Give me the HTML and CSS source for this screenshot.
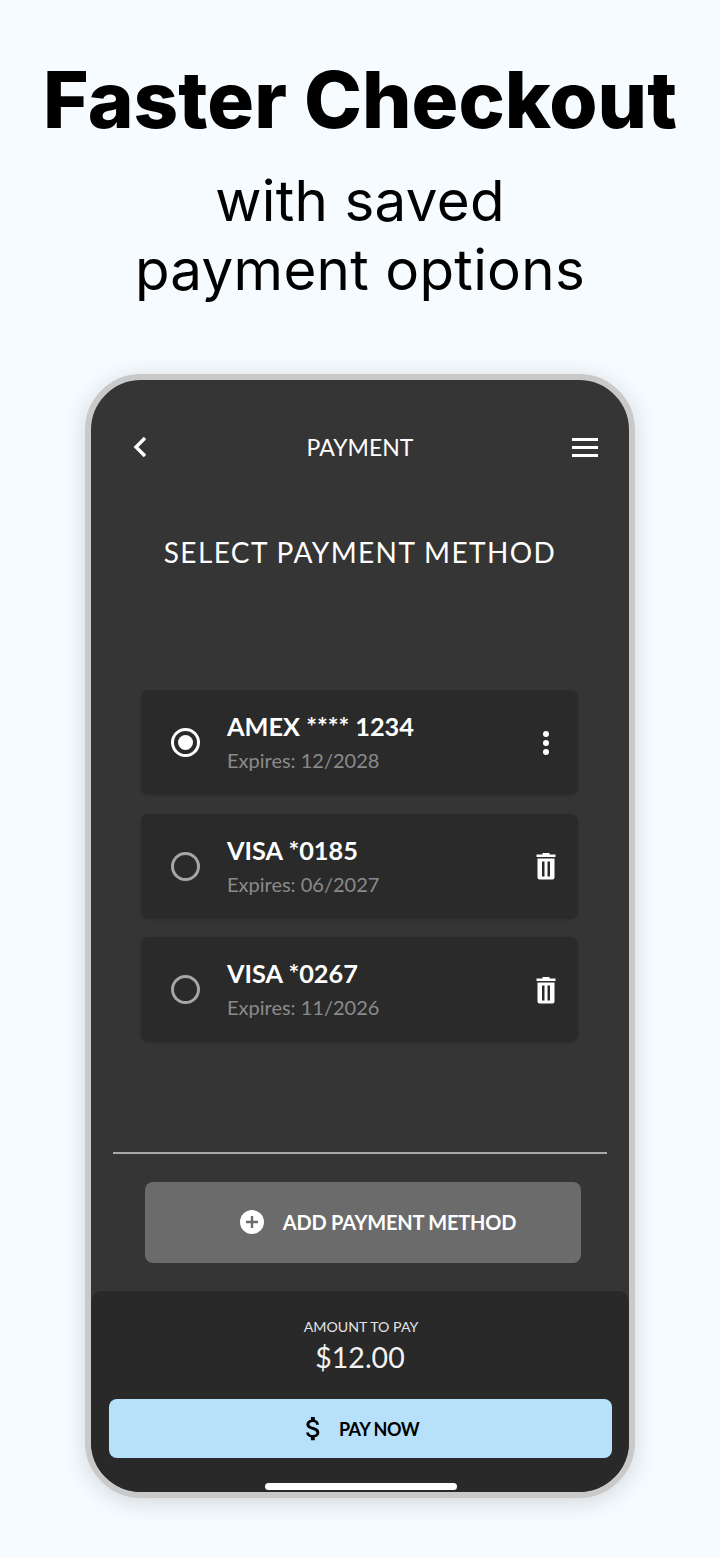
FILE: index.html
```html
<!DOCTYPE html>
<html lang="en">
<head>
  <meta charset="UTF-8">
  <meta name="viewport" content="width=device-width, initial-scale=1.0">
  <title>Faster Checkout</title>
  <link rel="stylesheet" href="styles.css">
</head>
<body>
  <div class="hero">
    <h1>Faster Checkout</h1>
    <p>with saved<br>payment options</p>
  </div>

  <div class="phone">
    <div class="topbar">
      <svg class="back" width="16" height="22" viewBox="0 0 16 22"><path d="M13 2 L4 11 L13 20" fill="none" stroke="#fff" stroke-width="3.4"/></svg>
      <div class="topbar-title">PAYMENT</div>
      <div class="menu"><span></span><span></span><span></span></div>
    </div>

    <div class="select-title">SELECT PAYMENT METHOD</div>

    <div class="cards">
      <div class="card">
        <div class="radio selected"></div>
        <div class="card-text">
          <div class="card-name">AMEX **** 1234</div>
          <div class="card-exp">Expires: 12/2028</div>
        </div>
        <div class="card-action">
          <div class="dots"><span></span><span></span><span></span></div>
        </div>
      </div>
      <div class="card">
        <div class="radio"></div>
        <div class="card-text">
          <div class="card-name">VISA *0185</div>
          <div class="card-exp">Expires: 06/2027</div>
        </div>
        <div class="card-action">
          <svg width="20" height="28" viewBox="0 0 20 28"><path d="M6.5 2.5 V1 H13.5 V2.5 H19.5 V5 H0.5 V2.5 Z M1.5 6.5 H18.5 V25.5 Q18.5 27.5 16.5 27.5 H3.5 Q1.5 27.5 1.5 25.5 Z M6 9.5 V24.5 H8.5 V9.5 Z M11.5 9.5 V24.5 H14 V9.5 Z" fill="#fff" fill-rule="evenodd"/></svg>
        </div>
      </div>
      <div class="card">
        <div class="radio"></div>
        <div class="card-text">
          <div class="card-name">VISA *0267</div>
          <div class="card-exp">Expires: 11/2026</div>
        </div>
        <div class="card-action">
          <svg width="20" height="28" viewBox="0 0 20 28"><path d="M6.5 2.5 V1 H13.5 V2.5 H19.5 V5 H0.5 V2.5 Z M1.5 6.5 H18.5 V25.5 Q18.5 27.5 16.5 27.5 H3.5 Q1.5 27.5 1.5 25.5 Z M6 9.5 V24.5 H8.5 V9.5 Z M11.5 9.5 V24.5 H14 V9.5 Z" fill="#fff" fill-rule="evenodd"/></svg>
        </div>
      </div>
    </div>

    <div class="divider"></div>

    <div class="add-btn">
      <svg width="24" height="24" viewBox="0 0 24 24"><path d="M12 0 A12 12 0 1 0 12 24 A12 12 0 1 0 12 0 Z M10.8 6 H13.2 V10.8 H18 V13.2 H13.2 V18 H10.8 V13.2 H6 V10.8 H10.8 Z" fill="#fff" fill-rule="evenodd"/></svg>
      <span>ADD PAYMENT METHOD</span>
    </div>

    <div class="footer">
      <div class="amount-label">AMOUNT TO PAY</div>
      <div class="amount">$12.00</div>
      <div class="pay-btn">
        <svg width="31" height="31" viewBox="0 0 24 24"><path d="M11.8 10.9c-2.27-.59-3-1.2-3-2.15 0-1.09 1.01-1.85 2.7-1.85 1.78 0 2.44.85 2.5 2.1h2.21c-.07-1.72-1.12-3.3-3.21-3.81V3h-3v2.16c-1.94.42-3.5 1.68-3.5 3.61 0 2.31 1.91 3.46 4.7 4.13 2.5.6 3 1.48 3 2.41 0 .69-.49 1.79-2.7 1.79-2.06 0-2.87-.92-2.98-2.1h-2.2c.12 2.19 1.76 3.42 3.68 3.83V21h3v-2.15c1.95-.37 3.5-1.5 3.5-3.55 0-2.84-2.43-3.81-4.7-4.4z" fill="#000"/></svg>
        <span>PAY NOW</span>
      </div>
      <div class="home-bar"></div>
    </div>
  </div>
</body>
</html>
```

FILE: styles.css
```css
body {
  margin: 0;
  height: 1558px;
  overflow: hidden;
  background: #f5fbff;
  font-family: "Lato", sans-serif;
}

.hero {
  padding-top: 54px;
  text-align: center;
  color: #000;
  font-family: "Inter", sans-serif;
}

.hero h1 {
  margin: 0;
  font-size: 78px;
  line-height: 92px;
  font-weight: 800;
}

.hero p {
  margin: 20px 0 0;
  font-size: 56.5px;
  line-height: 69px;
  font-weight: 400;
  letter-spacing: 0.3px;
}

.phone {
  box-sizing: border-box;
  width: 550px;
  height: 1124px;
  margin: 70px 0 0 85px;
  border: 6px solid #c9c9c9;
  border-radius: 56px;
  background: #353535;
  box-shadow: 0 4px 24px rgba(0, 0, 0, 0.15);
  overflow: hidden;
  display: flex;
  flex-direction: column;
}

.topbar {
  display: flex;
  justify-content: space-between;
  align-items: center;
  height: 34px;
  margin-top: 50px;
  padding: 0 31px 0 41px;
  color: #fff;
}

.topbar-title {
  font-size: 23px;
}

.back {
  width: 16px;
}

.menu {
  width: 26px;
  display: flex;
  flex-direction: column;
  gap: 5px;
}

.menu span {
  height: 3px;
  background: #fff;
}

.select-title {
  margin-top: 70px;
  text-align: center;
  color: #fff;
  font-size: 28px;
  line-height: 36px;
  font-weight: 400;
  letter-spacing: 1.4px;
}

.cards {
  display: flex;
  flex-direction: column;
  gap: 18.5px;
  margin: 120px 51px 0 50px;
}

.card {
  height: 105px;
  background: #2a2a2a;
  border-radius: 8px;
  box-shadow: 0 1px 3px rgba(0, 0, 0, 0.12);
  display: flex;
  align-items: center;
  padding: 0 22px 0 30px;
}

.radio {
  box-sizing: border-box;
  width: 29px;
  height: 29px;
  border: 3px solid #a6a6a6;
  border-radius: 50%;
  display: flex;
  align-items: center;
  justify-content: center;
  flex-shrink: 0;
}

.radio.selected {
  border-color: #fff;
}

.radio.selected::after {
  content: "";
  width: 15px;
  height: 15px;
  border-radius: 50%;
  background: #fff;
}

.card-text {
  flex: 1;
  margin-left: 27px;
  padding-bottom: 2px;
}

.card-name {
  color: #fff;
  font-size: 25.3px;
  line-height: 32px;
  font-weight: 700;
}

.card-exp {
  margin-top: 5px;
  color: #8a8a8a;
  font-size: 20px;
  line-height: 26px;
}

.card-action {
  width: 20px;
  display: flex;
  justify-content: center;
}

.dots {
  display: flex;
  flex-direction: column;
  gap: 3px;
}

.dots span {
  width: 6px;
  height: 6px;
  border-radius: 50%;
  background: #fff;
}

.divider {
  height: 2px;
  margin: 110px 22px 0;
  background: #a9a9a9;
}

.add-btn {
  box-sizing: border-box;
  height: 81px;
  margin: 28px 48px 0 54px;
  padding: 0 0 2px 30px;
  background: #6b6b6b;
  border-radius: 8px;
  display: flex;
  align-items: center;
  justify-content: center;
  gap: 19px;
  color: #fff;
  font-size: 20px;
  font-weight: 700;
  letter-spacing: -0.2px;
}

.footer {
  flex: 1;
  margin-top: 28px;
  background: #292929;
  border-radius: 10px 10px 0 0;
  display: flex;
  flex-direction: column;
  align-items: center;
}

.amount-label {
  margin-top: 26px;
  padding-left: 2px;
  color: #e2e2e2;
  font-size: 14.2px;
  line-height: 20px;
}

.amount {
  margin-top: 1px;
  color: #f2f2f2;
  font-size: 28.5px;
  line-height: 38px;
}

.pay-btn {
  box-sizing: border-box;
  width: 503px;
  height: 59px;
  margin-top: 23px;
  padding-right: 3px;
  background: #b7e0fb;
  border-radius: 8px;
  display: flex;
  align-items: center;
  justify-content: center;
  gap: 10px;
  color: #000;
  font-size: 18px;
  font-weight: 700;
  letter-spacing: -0.5px;
}

.home-bar {
  width: 192px;
  height: 7px;
  margin: 25px 0 0 2px;
  background: #fff;
  border-radius: 4px;
}
```
